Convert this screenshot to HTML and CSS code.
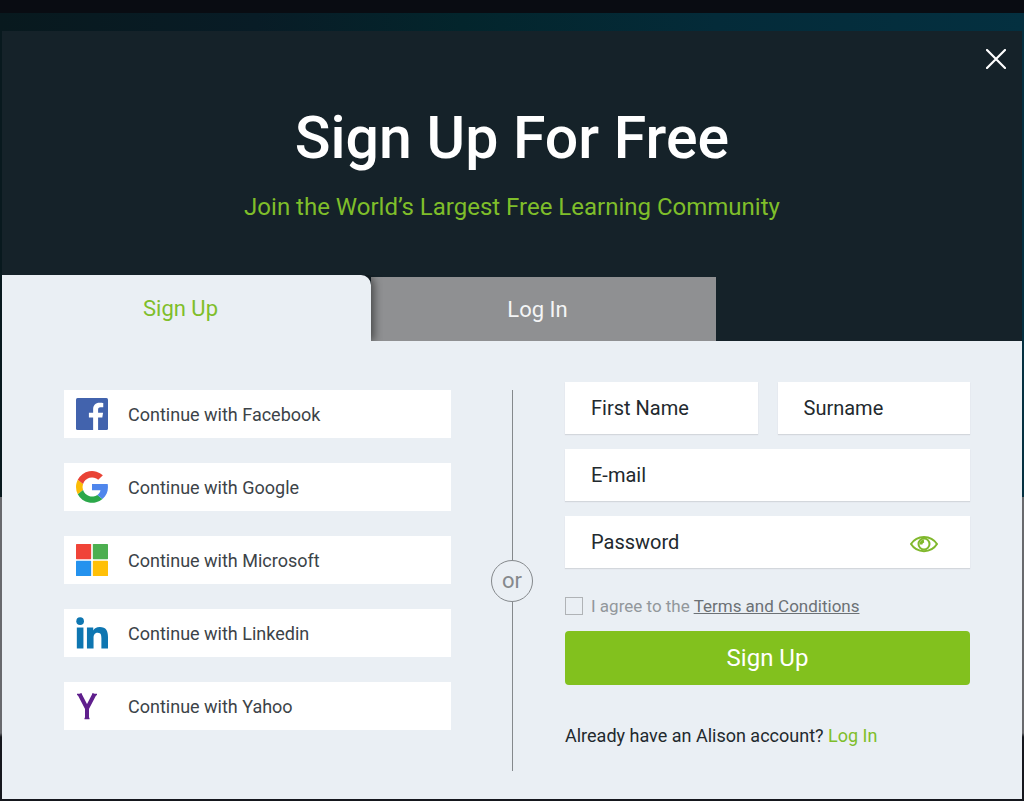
FILE: index.html
```
<!DOCTYPE html>
<html lang="en">
<head>
    <meta charset="UTF-8">
    <meta name="viewport" content="width=device-width, initial-scale=1.0">
    <title>Sign Up For Free</title>
    <link rel="stylesheet" href="styles.css">
</head>
<body>
    <div class="top-bar"></div>
    <div class="backdrop">
        <main class="modal">
            <header class="modal-header">
                <button class="btn-close" type="button" aria-label="Close">
                    <svg viewBox="0 0 20 20" width="20" height="20">
                        <path d="M1 1L19 19M19 1L1 19" stroke="#fff" stroke-width="2.2" stroke-linecap="round"/>
                    </svg>
                </button>
                <h1>Sign Up For Free</h1>
                <p class="subtitle">Join the World’s Largest Free Learning Community</p>
                <div class="tabs">
                    <button class="tab active" type="button">Sign Up</button>
                    <button class="tab" type="button">Log In</button>
                </div>
            </header>

            <div class="modal-body">
                <div class="social-list">
                    <button class="social-btn" type="button">
                        <svg viewBox="0 0 31 31" width="32" height="32">
                            <rect width="31" height="31" rx="1.5" fill="#4263ad"/>
                            <path fill="#fff" d="M16.600 31V19H12.500V14.400H16.600V11C16.600 6.900 19 4.600 22.700 4.600C24.500 4.600 26 4.700 26.400 4.800V9H23.800C21.800 9 21.400 10 21.400 11.400V14.400H26.200L25.500 19H21.400V31Z"/>
                        </svg>
                        <span>Continue with Facebook</span>
                    </button>
                    <button class="social-btn" type="button">
                        <svg viewBox="4 4 40 40" width="32" height="32">
                            <path fill="#fbbc05" d="M4 24c0-3.200.8-6.300 2.200-9l6.600 5.100a11.800 11.800 0 0 0 0 7.800L6.200 33A20 20 0 0 1 4 24z"/>
                            <path fill="#e94335" d="M6.200 15A20 20 0 0 1 37.600 9.300l-5.800 5.500A12 12 0 0 0 12.800 20.100z"/>
                            <path fill="#2ba84a" d="M6.200 33l6.600-5.100a12 12 0 0 0 17.900 6l6.400 5A20 20 0 0 1 6.200 33z"/>
                            <path fill="#4f86ec" d="M24 20.300h19.600c1.200 7.500-1 14.200-6.500 18.600l-6.400-5c2-1.300 3.400-3.300 3.900-5.800H24z"/>
                        </svg>
                        <span>Continue with Google</span>
                    </button>
                    <button class="social-btn" type="button">
                        <svg viewBox="0 0 31 31" width="32" height="32">
                            <rect width="14.700" height="14.700" rx="0.6" fill="#f04438"/>
                            <rect x="16.300" width="14.700" height="14.700" rx="0.6" fill="#4caf50"/>
                            <rect y="16.300" width="14.700" height="14.700" rx="0.6" fill="#2492ee"/>
                            <rect x="16.300" y="16.300" width="14.700" height="14.700" rx="0.6" fill="#ffc008"/>
                        </svg>
                        <span>Continue with Microsoft</span>
                    </button>
                    <button class="social-btn" type="button">
                        <svg viewBox="0 0 31 31" width="32" height="32" fill="#0e76b1">
                            <circle cx="4" cy="4" r="3.700"/>
                            <rect x="0.800" y="10.200" width="6.400" height="20.300"/>
                            <path d="M10.600 10.200H16.700V13C17.700 11.200 19.900 9.700 23 9.700C29.300 9.700 31 13.700 31 19.300V30.500H24.600V20.600C24.600 18.200 24.500 15.200 21.100 15.200C17.700 15.200 17 17.700 17 20.400V30.500H10.600Z"/>
                        </svg>
                        <span>Continue with Linkedin</span>
                    </button>
                    <button class="social-btn" type="button">
                        <svg viewBox="0 0 32 32" width="32" height="32">
                            <path d="M3.500 4L11 18.500L18.500 4M11 17.500V29" fill="none" stroke="#5f1f8d" stroke-width="4"/>
                            <path d="M1 4.500H6M16 4.500H21M8.500 28.500H13.500" stroke="#5f1f8d" stroke-width="1.500"/>
                        </svg>
                        <span>Continue with Yahoo</span>
                    </button>
                </div>

                <div class="divider"><span>or</span></div>

                <form class="signup-form">
                    <div class="name-row">
                        <input class="field" type="text" placeholder="First Name" aria-label="First Name">
                        <input class="field" type="text" placeholder="Surname" aria-label="Surname">
                    </div>
                    <input class="field" type="email" placeholder="E-mail" aria-label="E-mail">
                    <div class="password-box">
                        <input class="field" type="password" placeholder="Password" aria-label="Password">
                        <button class="btn-eye" type="button" aria-label="Show password">
                            <svg viewBox="0 0 28 18" width="28" height="18" fill="none" stroke="#80b82c">
                                <path d="M1 9C7-.5 21-.5 27 9C21 18.500 7 18.500 1 9Z" stroke-width="2"/>
                                <circle cx="14" cy="9" r="5.500" stroke-width="2"/>
                                <path d="M11 9.500A3.500 3.500 0 0 1 14 6" stroke-width="2.800"/>
                            </svg>
                        </button>
                    </div>
                    <div class="terms">
                        <input type="checkbox" id="terms">
                        <label for="terms">I agree to the <a href="#">Terms and Conditions</a></label>
                    </div>
                    <button class="btn-submit" type="submit">Sign Up</button>
                    <p class="account">Already have an Alison account? <a href="#">Log In</a></p>
                </form>
            </div>
        </main>
    </div>
</body>
</html>
```
FILE: styles.css
```
* {
    box-sizing: border-box;
}
body {
    font-family: Roboto, "Liberation Sans", sans-serif;
    margin: 0;
    min-height: 100vh;
    display: flex;
    flex-direction: column;
    background-color: #090c12;
}
button, input {
    font-family: inherit;
}
button {
    border: none;
    cursor: pointer;
}
.top-bar {
    height: 13px;
}
.backdrop {
    flex: 1;
    display: flex;
    padding: 18px 2px 2px;
    background:
        linear-gradient(transparent 484px, #68696d 484px, #68696d 720px, #15171d 724px),
        linear-gradient(to right, #08191e, #081c26 25%, #03252c 45%, #042b39 70%, #043040);
}
.modal {
    flex: 1;
    display: flex;
    flex-direction: column;
    background: #eaeff4;
}
.modal-header {
    position: relative;
    background: #152229;
    text-align: center;
    padding-top: 69px;
}
.btn-close {
    position: absolute;
    top: 12px;
    right: 10px;
    padding: 6px;
    background: none;
}
.btn-close svg, .btn-eye svg {
    display: block;
}
h1 {
    margin: 0;
    color: #fff;
    font-size: 59px;
    line-height: 76px;
    font-weight: 500;
}
.subtitle {
    margin: 15px 0 52px;
    color: #7fbe2a;
    font-size: 24px;
    line-height: 32px;
}
.tabs {
    display: grid;
    grid-template-columns: 369fr 345fr 306fr;
    align-items: end;
}
.tab {
    height: 64px;
    padding: 0 12px 0 0;
    background: #8f9092;
    color: #f4f5f6;
    font-size: 22px;
}
.tab.active {
    position: relative;
    height: 66px;
    background: #eaeff4;
    color: #7fbe2a;
    border-radius: 0 10px 0 0;
    box-shadow: 3px 0 8px rgba(0, 0, 0, 0.5);
    clip-path: inset(0 -12px 0 0);
}
.modal-body {
    flex: 1;
    display: grid;
    grid-template-columns: 387fr auto 405fr;
    padding: 41px 52px 28px 62px;
}
.social-list {
    display: flex;
    flex-direction: column;
    gap: 25px;
    padding-top: 8px;
}
.social-btn {
    display: flex;
    align-items: center;
    gap: 20px;
    height: 48px;
    padding: 0 12px;
    background: #fff;
    color: #3c4348;
    font-size: 18px;
}
.divider {
    display: flex;
    flex-direction: column;
    align-items: center;
    margin: 8px 32px 0 40px;
    color: #85898c;
    font-size: 22px;
}
.divider::before,
.divider::after {
    content: '';
    flex: 1;
    width: 1px;
    background: #85898c;
}
.divider span {
    width: 42px;
    height: 42px;
    border: 1px solid #85898c;
    border-radius: 50%;
    line-height: 40px;
    text-align: center;
}
.signup-form {
    display: flex;
    flex-direction: column;
    gap: 15px;
    min-width: 0;
}
.name-row {
    display: flex;
    gap: 20px;
}
.field {
    width: 100%;
    min-width: 0;
    height: 52px;
    padding: 0 26px;
    border: none;
    border-radius: 0;
    background: #fff;
    color: #22292e;
    font-size: 20px;
    box-shadow: 0 1px 1px #d3d7dc;
}
.field::placeholder {
    color: #22292e;
    opacity: 1;
}
.password-box {
    position: relative;
}
.btn-eye {
    position: absolute;
    top: 15px;
    right: 28px;
    padding: 4px;
    background: none;
}
.terms {
    display: flex;
    align-items: center;
    gap: 8px;
    height: 24px;
    margin-top: 11px;
    color: #92979b;
    font-size: 17px;
}
.terms input {
    appearance: none;
    width: 18px;
    height: 18px;
    margin: 0;
    border: 1px solid #b0b3b6;
}
.terms input:checked {
    background: #80c11e;
}
.terms a {
    color: #6c7175;
}
.btn-submit {
    height: 54px;
    margin-top: -2px;
    border-radius: 4px;
    background: #82c11e;
    color: #fff;
    font-size: 24px;
}
.account {
    margin: 24px 0 0;
    color: #22292e;
    font-size: 18px;
    line-height: 24px;
}
.account a {
    color: #7fbe2a;
    text-decoration: none;
}

@media (max-width: 760px) {
    h1 {
        font-size: 40px;
    }
    .tabs {
        grid-template-columns: 1fr 1fr;
    }
    .modal-body {
        grid-template-columns: 1fr;
        padding: 24px;
    }
    .divider {
        margin: 16px 0;
    }
}
```
